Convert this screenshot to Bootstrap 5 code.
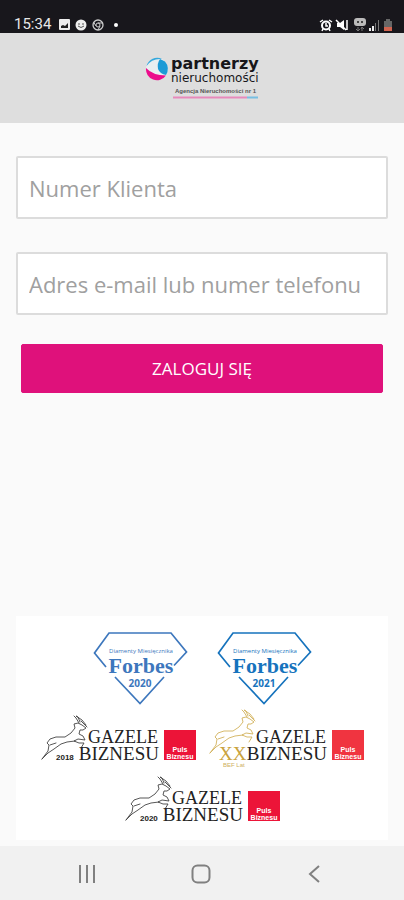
<!DOCTYPE html>
<html lang="pl">
<head>
<meta charset="utf-8">
<meta name="viewport" content="width=device-width, initial-scale=1">
<title>Partnerzy Nieruchomości – logowanie</title>
<link rel="stylesheet" href="https://cdn.jsdelivr.net/npm/bootstrap@5.3.0/dist/css/bootstrap.min.css">
<style>
  body { background: #fafafa; font-family: "Open Sans", "Noto Sans", sans-serif; }
  svg { display: block; flex-shrink: 0; }
  .status-bar { background: #18171c; color: #e8e8e8; font: 15px/17px Roboto, sans-serif; padding: 16px 11px 0 14px; }
  .brand-bar { background: #dedede; padding: 21px 0; }
  .login-form { padding: 33px 16px 0; }
  .login-field { height: 63px; font-size: 22px; padding: 0 11px; background: #fff; border: 2px solid #dcdcdc; border-radius: 2px; margin-bottom: 33px; }
  .login-field::placeholder { color: #a0a0a0; opacity: 1; }
  .login-btn { --bs-btn-color: #fff; --bs-btn-bg: #df117b; --bs-btn-border-color: #df117b; --bs-btn-hover-color: #fff; --bs-btn-hover-bg: #c40f6c; --bs-btn-hover-border-color: #c40f6c; --bs-btn-font-size: 17px; --bs-btn-line-height: 25px; --bs-btn-padding-y: 11px; --bs-btn-border-radius: 2px; margin: -4px 5px 0; }
  .awards { background: #fff; margin: 0 16px 6px; padding: 14px 0 10px; }
  .award-row { gap: 12px; margin-bottom: 1px; }
  .award-row-wide { gap: 29px; margin-bottom: 2px; }
  .award-title { fill: #222; font-family: "Liberation Serif", serif; text-anchor: end; }
  .award-year { fill: #222; font: 700 8px "Liberation Sans", sans-serif; }
  .puls-text { fill: #fff; font: 700 7px "Liberation Sans", sans-serif; text-anchor: middle; }
  .forbes { fill: currentColor; text-anchor: middle; }
  .forbes-name { font: 700 22px "Liberation Serif", serif; }
  .forbes-over { font-size: 6px; }
  .forbes-year { font-size: 10px; font-weight: 700; }
  .system-nav { background: #f1f1f1; height: 54px; padding: 2px 48px 0 45px; }
  .system-nav button { color: #808080; }
</style>
<script src="https://cdn.jsdelivr.net/npm/bootstrap@5.3.0/dist/js/bootstrap.bundle.min.js"></script>
</head>
<body class="d-flex flex-column min-vh-100">

<svg width="0" height="0" class="position-absolute" aria-hidden="true">
  <defs>
    <g id="diamond" fill="none" stroke="currentColor" stroke-width="1.7">
      <path d="M13 37 1.500 23 16 3H78L93.500 22 81 35.500M22 47 47 73.500 71 47"/>
    </g>
    <g id="gazelle" fill="none" stroke="currentColor" stroke-width=".9" stroke-linejoin="round" stroke-linecap="round">
      <path d="M2 51 8 43 9 37 7 35 10 31 16 29 25 29 31 25 35 20 34 16 38 15 42 17 46 20 43 22 40 22 39 26 43 28 45 32 38 31 34 33 39 35 44 35 41 40M35 33 27 34 21 36 14 41 8 45 2 51M10 37 16 35"/>
      <path d="M39 15 36 10 34 8M40 14 38 9 36 8 42 12 46 17M41 13 47 19"/>
    </g>
  </defs>
</svg>

<div class="status-bar d-flex justify-content-between align-items-center">
  <div class="d-flex align-items-center gap-2">
    <span>15:34</span>
    <svg width="64" height="12" viewBox="0 0 64 12" aria-hidden="true">
      <rect width="11" height="11" rx="1" fill="#eee"/><path d="M2 9V7L4 6 6 7 9 4V9z" fill="#222"/>
      <circle cx="22" cy="6" r="5.500" fill="#eee"/><path d="M19 5h2M23 5h2M19 7q3 3 6 0" stroke="#555" fill="none"/>
      <circle cx="39" cy="6" r="5" fill="none" stroke="#ccc" stroke-width="1.300"/><circle cx="39" cy="6" r="2" fill="none" stroke="#ccc"/><path d="M39 4h5M37 7l-2.500-4M41 7l-2 4" stroke="#ccc"/>
      <circle cx="57" cy="6" r="2" fill="#fff"/>
    </svg>
  </div>
  <svg width="74" height="14" viewBox="0 0 74 14" aria-hidden="true">
    <circle cx="7" cy="7.500" r="4" fill="none" stroke="#fff" stroke-width="2"/><path d="M7 5v3h2M1 4l3-2M13 4l-3-2M3 13l1-2M11 13l-1-2" stroke="#fff" stroke-width="1.500" fill="none"/>
    <path d="M18 5h3l4-3v10l-4-3h-3z" fill="#fff"/><path d="M17 2 27 12M28 2v10" stroke="#fff" stroke-width="1.500"/>
    <rect x="35" y="0" width="12" height="8" rx="3" fill="#bbb"/><path d="M38 3h2v2h-2zM42 3h2v2h-2z" fill="#444"/><path d="M39 9v4M37 11l2 2 2-2M43 13V9M42 11l1-2 2 2" stroke="#777" fill="none"/>
    <path d="M50 13v-3h2v3zM53 13v-5h2v5z" fill="#eee"/><path d="M56 13V5h1v8zM59 13V2h1v11z" fill="#777"/>
    <path d="M65 3h2V1h4v2h2v6h-8z" fill="#666"/><path d="M65 9h8v4h-8z" fill="#d06450"/>
  </svg>
</div>

<header class="brand-bar d-flex justify-content-center">
  <svg width="114" height="48" viewBox="0 0 114 48" role="img" aria-label="Partnerzy Nieruchomości">
    <circle cx="12" cy="15" r="11" fill="#e9eef1"/>
    <path d="M20 7.500A11 11 0 0 1 21 21Q15 20 13 15 12 9 15 5z" fill="#1c9ad6"/>
    <path d="M1 14Q8 21.500 21 21.500A11 11 0 0 1 1 14z" fill="#ec0c8c"/>
    <path d="M1.500 12A11 11 0 0 1 17 5Q7 4 1.500 12z" fill="#35a8dc"/>
    <g font-family="DejaVu Sans, sans-serif" fill="#17171a">
      <text x="26" y="15" font-size="16" font-weight="700">partnerzy</text>
      <text x="26" y="28" font-size="12">nieruchomości</text>
    </g>
    <text x="30" y="39" font-family="Liberation Sans, sans-serif" font-size="6" font-weight="700" fill="#555">Agencja Nieruchomości nr 1</text>
    <path d="M28 43.500h74" stroke="#e78abb" stroke-width="2"/><path d="M102 43.500h11" stroke="#77bfe3" stroke-width="2"/>
  </svg>
</header>

<main class="flex-grow-1 d-flex flex-column justify-content-between">
  <form class="login-form d-flex flex-column">
    <input class="form-control login-field" type="text" aria-label="Numer Klienta" placeholder="Numer Klienta">
    <input class="form-control login-field" type="text" aria-label="Adres e-mail lub numer telefonu" placeholder="Adres e-mail lub numer telefonu">
    <button class="btn login-btn" type="submit">ZALOGUJ SIĘ</button>
  </form>

  <section class="awards" aria-label="Nagrody">
    <div class="award-row-wide d-flex justify-content-center">
      <svg class="forbes" width="95" height="76" viewBox="0 0 95 76" color="#3d77bd">
        <use href="#diamond"/>
        <text class="forbes-over" x="48" y="23">Diamenty Miesięcznika</text>
        <text class="forbes-name" x="48" y="43">Forbes</text>
        <text class="forbes-year" x="47" y="57">2020</text>
      </svg>
      <svg class="forbes" width="95" height="76" viewBox="0 0 95 76" color="#1673bd">
        <use href="#diamond"/>
        <text class="forbes-over" x="48" y="23">Diamenty Miesięcznika</text>
        <text class="forbes-name" x="48" y="43">Forbes</text>
        <text class="forbes-year" x="47" y="57">2021</text>
      </svg>
    </div>
    <div class="award-row d-flex justify-content-center">
      <svg width="156" height="60" viewBox="0 0 156 60">
        <use href="#gazelle" color="#444"/>
        <g class="award-title"><text x="118" y="35" font-size="18">GAZELE</text><text x="119" y="52" font-size="19">BIZNESU</text></g>
        <path fill="#ec1438" d="M124 22h32v30h-32z"/>
        <g class="puls-text"><text x="140" y="44">Puls</text><text x="140" y="51">Biznesu</text></g>
        <text class="award-year" x="16" y="52">2018</text>
      </svg>
      <svg width="156" height="60" viewBox="0 0 156 60">
        <use href="#gazelle" color="#d2b25c" y="-6"/>
        <g class="award-title"><text x="118" y="35" font-size="18">GAZELE</text><text x="119" y="52" font-size="19">BIZNESU</text></g>
        <path fill="#f03440" d="M124 22h32v30h-32z"/>
        <g class="puls-text"><text x="140" y="44">Puls</text><text x="140" y="51">Biznesu</text></g>
        <text x="11" y="52" font-family="Liberation Serif, serif" font-size="19" fill="#c9a23c">XX</text>
        <text x="15" y="59" font-family="Liberation Sans, sans-serif" font-size="6" fill="#cdb05c">BEF Lat</text>
      </svg>
    </div>
    <div class="award-row d-flex justify-content-center">
      <svg width="156" height="60" viewBox="0 0 156 60">
        <use href="#gazelle" color="#444"/>
        <g class="award-title"><text x="118" y="35" font-size="18">GAZELE</text><text x="119" y="52" font-size="19">BIZNESU</text></g>
        <path fill="#ec1438" d="M124 22h32v30h-32z"/>
        <g class="puls-text"><text x="140" y="44">Puls</text><text x="140" y="51">Biznesu</text></g>
        <text class="award-year" x="16" y="52">2020</text>
      </svg>
    </div>
  </section>
</main>

<nav class="system-nav d-flex justify-content-between align-items-center" aria-label="System">
  <button class="btn border-0" type="button" aria-label="Ostatnie"><svg width="60" height="20" viewBox="0 0 60 20" fill="none" stroke="currentColor" stroke-width="2"><path d="M23 1v18M30 1v18M37 1v18"/></svg></button>
  <button class="btn border-0" type="button" aria-label="Ekran główny"><svg width="20" height="20" viewBox="0 0 20 20" fill="none" stroke="currentColor" stroke-width="2"><rect x="1.500" y="1.500" width="17" height="17" rx="5"/></svg></button>
  <button class="btn border-0" type="button" aria-label="Wstecz"><svg width="60" height="20" viewBox="0 0 60 20" fill="none" stroke="currentColor" stroke-width="2"><path d="M35 2 26 10l9 8"/></svg></button>
</nav>
</body>
</html>
